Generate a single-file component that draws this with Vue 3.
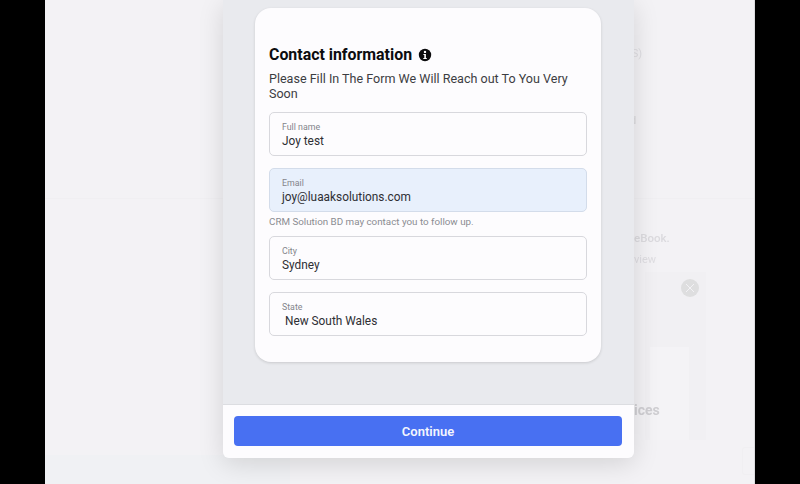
<template>
  <div class="stage">
    <div class="page">
      <!-- faded page behind the modal -->
      <div class="behind">
        <div class="ghost-line"></div>
        <div class="ghost-panel">
          <div class="ghost-inner"></div>
          <div class="ghost-close">
            <svg width="10" height="10" viewBox="0 0 10 10" fill="none" stroke="#f3f2f5" stroke-width="1">
              <line x1="1" y1="1" x2="9" y2="9" />
              <line x1="9" y1="1" x2="1" y2="9" />
            </svg>
          </div>
        </div>
        <span class="ghost ghost-s">(S)</span>
        <span class="ghost ghost-d">d</span>
        <span class="ghost ghost-book">eBook.</span>
        <span class="ghost ghost-view">view</span>
        <span class="ghost ghost-ices">ices</span>
        <div class="ghost-box"></div>
        <div class="ghost-strip"></div>
      </div>

      <div class="modal">
        <div class="modal-body">
          <div class="card">
            <h2 class="title">
              Contact information
              <svg class="info" width="14" height="14" viewBox="0 0 14 14">
                <circle cx="7" cy="7" r="6.2" fill="#0b0b0d" />
                <circle cx="7" cy="3.9" r="1.2" fill="#fff" />
                <path d="M5.4 6h2.5v4.1h0.9v1H5.3v-1h1V7H5.4z" fill="#fff" />
              </svg>
            </h2>
            <p class="subtitle">Please Fill In The Form We Will Reach out To You Very Soon</p>

            <div class="field">
              <label>Full name</label>
              <div class="value">Joy test</div>
            </div>

            <div class="field field-filled">
              <label>Email</label>
              <div class="value">joy@luaaksolutions.com</div>
            </div>
            <p class="hint">CRM Solution BD may contact you to follow up.</p>

            <div class="field">
              <label>City</label>
              <div class="value">Sydney</div>
            </div>

            <div class="field">
              <label>State</label>
              <div class="value value-select">New South Wales</div>
            </div>
          </div>
        </div>
        <div class="modal-footer">
          <button class="continue">Continue</button>
        </div>
      </div>
    </div>
  </div>
</template>

<script setup>
</script>

<style>
html,
body {
  margin: 0;
  background: #000;
}
</style>

<style scoped>
.stage {
  width: 800px;
  height: 484px;
  background: #000;
  display: flex;
  justify-content: center;
  overflow: hidden;
  font-family: Roboto, "Noto Sans", sans-serif;
}

.page {
  position: relative;
  width: 710px;
  height: 484px;
  background: #f3f2f5;
  border-right: 1px solid #dcdcdf;
  box-sizing: border-box;
  padding-left: 178px;
}

.behind {
  position: absolute;
  inset: 0;
  overflow: hidden;
  filter: blur(0.5px);
}

.ghost {
  position: absolute;
  left: 589px;
  font-size: 11px;
  line-height: 14px;
  color: #dedde1;
}

.ghost-s { top: 47px; left: 583px; }
.ghost-d { top: 114px; color: #d6d6d9; left: 585px; }
.ghost-book { top: 231px; color: #dbdade; font-size: 11.5px; font-weight: 500; }
.ghost-view { top: 253px; }
.ghost-ices { top: 402px; font-size: 14px; font-weight: 700; line-height: 16px; color: #cfced2; }

.ghost-line {
  position: absolute;
  left: 0;
  right: 0;
  top: 198px;
  height: 1px;
  background: #f0eff2;
}

.ghost-panel {
  position: absolute;
  left: 600px;
  top: 272px;
  width: 61px;
  height: 168px;
  background: #f1f0f3;
}

.ghost-inner {
  position: absolute;
  left: 5px;
  top: 75px;
  width: 39px;
  height: 93px;
  background: #f4f3f6;
}

.ghost-close {
  position: absolute;
  left: 36px;
  top: 7px;
  width: 18px;
  height: 18px;
  border-radius: 50%;
  background: #dededf;
  display: flex;
  align-items: center;
  justify-content: center;
}

.ghost-box {
  position: absolute;
  right: 0;
  top: 447px;
  width: 11px;
  height: 26px;
  border: 1px solid #f0eff2;
  border-right: none;
  border-radius: 3px 0 0 3px;
}

.ghost-strip {
  position: absolute;
  left: 0;
  bottom: 0;
  width: 245px;
  height: 29px;
  background: #f0f1f4;
}

.modal {
  position: relative;
  width: 411px;
  height: 458px;
  background: #e9eaee;
  border-radius: 0 0 6px 6px;
  box-shadow: 0 6px 26px rgba(0, 0, 0, 0.13);
  display: flex;
  flex-direction: column;
  overflow: hidden;
}

.modal-body {
  flex: 1;
  padding: 8px 1px 0 0;
  display: flex;
  justify-content: center;
  align-items: flex-start;
}

.card {
  width: 346px;
  height: 354px;
  box-sizing: border-box;
  padding: 36px 14px 0;
  background: #fdfcfe;
  border-radius: 16px;
  box-shadow: 0 1px 3px rgba(0, 0, 0, 0.14);
}

.title {
  margin: 0;
  display: flex;
  align-items: center;
  gap: 6px;
  font-size: 15.9px;
  line-height: 22px;
  font-weight: 700;
  color: #0c0c0f;
}

.subtitle {
  margin: 5px 0 0;
  font-size: 12.55px;
  line-height: 15px;
  color: #3c3d42;
}

.field {
  margin-top: 12px;
  height: 44px;
  box-sizing: border-box;
  padding: 8px 12px 0;
  border: 1px solid #d8d8dd;
  border-radius: 5px;
  background: #fdfcfe;
}

.subtitle + .field {
  margin-top: 11px;
}

.field label {
  display: block;
  font-size: 8.8px;
  line-height: 12px;
  color: #84858b;
}

.value {
  font-size: 11.85px;
  line-height: 16px;
  color: #2e2f34;
}

.value-select {
  padding-left: 3px;
}

.field-filled {
  background: #e8f0fc;
  border-color: #d3dcea;
}

.hint {
  margin: 3px 0 0;
  font-size: 9.8px;
  line-height: 14px;
  color: #8b8c92;
}

.hint + .field {
  margin-top: 7px;
}

.modal-footer {
  height: 54px;
  box-sizing: border-box;
  padding: 11px 12px 0 11px;
  background: #fdfcfe;
  border-top: 1px solid #dcdde1;
}

.continue {
  display: block;
  width: 100%;
  height: 30px;
  border: none;
  border-radius: 4px;
  background: #4870f2;
  color: #f4f6fe;
  font-family: inherit;
  font-size: 13px;
  font-weight: 600;
}
</style>
